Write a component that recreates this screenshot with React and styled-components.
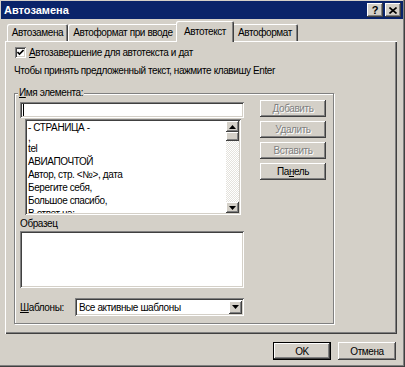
import styled, { createGlobalStyle } from 'styled-components';

const GlobalStyle = createGlobalStyle`
    html, body {
        margin: 0;
        padding: 0;
        background: #d4d0c8;
    }
    body {
        font-family: "Liberation Sans", Arial, sans-serif;
        font-size: 10px;
        letter-spacing: -0.4px;
        color: #000;
    }
    * {
        box-sizing: border-box;
    }
`;

const raised = `
    box-shadow: inset -1px -1px 0 #404040, inset 1px 1px 0 #fff,
        inset -2px -2px 0 #808080, inset 2px 2px 0 #d4d0c8;
`;

const sunken = `
    box-shadow: inset 1px 1px 0 #808080, inset -1px -1px 0 #fff,
        inset 2px 2px 0 #404040, inset -2px -2px 0 #d4d0c8;
`;

const Window = styled.div`
    width: 405px;
    height: 367px;
    padding: 1px 2px 0 1px;
    background: #d4d0c8;
    box-shadow: inset -1px -1px 0 #404040, inset -2px -2px 0 #808080;
`;

const TitleBar = styled.div`
    display: flex;
    align-items: center;
    justify-content: space-between;
    height: 18px;
    padding: 0 2px 0 3px;
    background: #0a246a;
`;

const Title = styled.span`
    color: #fff;
    font-weight: 700;
    font-size: 11px;
    letter-spacing: 0;
`;

const CaptionButtons = styled.div`
    display: flex;
    gap: 2px;
`;

const CaptionButton = styled.div`
    width: 16px;
    height: 14px;
    display: flex;
    align-items: center;
    justify-content: center;
    background: #d4d0c8;
    font-weight: 700;
    font-size: 11px;
    letter-spacing: 0;
    ${raised}
`;

const Content = styled.div`
    padding: 0 0 0 4px;
`;

const TabStrip = styled.div`
    display: flex;
    align-items: flex-end;
    height: 20px;
    margin-top: 2px;
    padding-left: 2px;
`;

const Tab = styled.div`
    position: relative;
    width: ${(p) => p.$w}px;
    height: ${(p) => (p.$active ? 21 : 17)}px;
    margin: ${(p) => (p.$active ? '0 -2px -1px' : '0')};
    padding-top: ${(p) => (p.$active ? 5 : 3)}px;
    text-align: center;
    white-space: nowrap;
    background: #d4d0c8;
    border-radius: 2px 2px 0 0;
    z-index: ${(p) => (p.$active ? 2 : 1)};
    box-shadow: inset 1px 1px 0 #fff, inset -1px 0 0 #404040,
        inset -2px 0 0 #808080;
`;

const Page = styled.div`
    position: relative;
    width: 392px;
    height: 293px;
    padding: 6px 0 0 9px;
    box-shadow: inset 1px 1px 0 #fff, inset -1px -1px 0 #404040,
        inset -2px -2px 0 #808080;
`;

const CheckRow = styled.label`
    display: flex;
    align-items: center;
    gap: 3px;
    height: 11px;
    margin-left: 1px;
`;

const CheckBox = styled.span`
    width: 11px;
    height: 11px;
    display: flex;
    align-items: center;
    justify-content: center;
    background: #fff;
    ${sunken}
`;

const Hint = styled.div`
    margin-top: 7px;
    line-height: 12px;
`;

const GroupBox = styled.fieldset`
    width: 320px;
    height: 237px;
    margin: 10px 0 0 0;
    padding: 3px 0 0 5px;
    border: 1px solid #808080;
    box-shadow: 1px 1px 0 #fff, inset 1px 1px 0 #fff;
`;

const Legend = styled.legend`
    padding: 0 1px;
    margin-left: -2px;
    line-height: 12px;
    background: #d4d0c8;
`;

const GroupInner = styled.div`
    display: flex;
    gap: 16px;
`;

const LeftColumn = styled.div`
    width: 224px;
    display: flex;
    flex-direction: column;
`;

const TextField = styled.div`
    height: 16px;
    padding: 2px 3px;
    background: #fff;
    ${sunken}
`;

const Caret = styled.span`
    display: block;
    width: 1px;
    height: 12px;
    background: #000;
`;

const ListBox = styled.div`
    display: flex;
    width: 216px;
    height: 96px;
    margin: 1px 0 0 5px;
    padding: 2px;
    background: #fff;
    ${sunken}
`;

const ListItems = styled.div`
    flex: 1;
    overflow: hidden;
`;

const ListItem = styled.div`
    height: ${(p) => p.$h || 13}px;
    line-height: ${(p) => p.$h || 13}px;
    padding-left: 1px;
    white-space: nowrap;
`;

const ScrollBar = styled.div`
    width: 13px;
    display: flex;
    flex-direction: column;
    background: repeating-conic-gradient(#fff 0 25%, #e4e2dc 0 50%) 0 0 / 2px 2px;
`;

const ArrowButton = styled.div`
    width: 13px;
    height: ${(p) => p.$h || 13}px;
    display: flex;
    align-items: center;
    justify-content: center;
    flex-shrink: 0;
    background: #d4d0c8;
    ${raised}
`;

const Track = styled.div`
    flex: 1;
`;

const FieldLabel = styled.div`
    margin-top: 2px;
    line-height: 13px;
`;

const Preview = styled.div`
    height: 57px;
    margin-top: 1px;
    background: #fff;
    ${sunken}
`;

const TemplateRow = styled.div`
    display: flex;
    align-items: center;
    margin-top: 10px;
`;

const TemplateLabel = styled.span`
    width: 55px;
`;

const Combo = styled.div`
    display: flex;
    align-items: center;
    width: 169px;
    height: 18px;
    padding: 2px 2px 2px 4px;
    background: #fff;
    ${sunken}
`;

const ComboText = styled.span`
    flex: 1;
    white-space: nowrap;
`;

const ButtonColumn = styled.div`
    display: flex;
    flex-direction: column;
    gap: 4px;
    margin-top: -2px;
`;

const Button = styled.div`
    width: ${(p) => p.$w || 66}px;
    height: ${(p) => p.$h || 17}px;
    display: flex;
    align-items: center;
    justify-content: center;
    background: #d4d0c8;
    color: ${(p) => (p.$disabled ? '#808080' : '#000')};
    text-shadow: ${(p) => (p.$disabled ? '1px 1px 0 #fff' : 'none')};
    ${raised}
    ${(p) =>
        p.$default &&
        `box-shadow: inset 0 0 0 1px #000, inset -2px -2px 0 #404040, inset 2px 2px 0 #fff,
        inset -3px -3px 0 #808080;`}
`;

const Footer = styled.div`
    display: flex;
    justify-content: flex-end;
    gap: 7px;
    width: 392px;
    margin-top: 8px;
    padding-right: 1px;
`;

const ArrowUp = () => (
    <svg width="7" height="4" viewBox="0 0 7 4">
        <polygon points="3.5,0 7,4 0,4" fill="#000" />
    </svg>
);

const ArrowDown = () => (
    <svg width="7" height="4" viewBox="0 0 7 4">
        <polygon points="0,0 7,0 3.5,4" fill="#000" />
    </svg>
);

const App = () => {
    const tabs = [
        { label: 'Автозамена', w: 61 },
        { label: 'Автоформат при вводе', w: 110 },
        { label: 'Автотекст', w: 58, active: true },
        { label: 'Автоформат', w: 66 },
    ];

    const entries = [
        { text: '- СТРАНИЦА -' },
        { text: ',', h: 8 },
        { text: 'tel' },
        { text: 'АВИАПОЧТОЙ' },
        { text: 'Автор, стр. <№>, дата' },
        { text: 'Берегите себя,' },
        { text: 'Большое спасибо,' },
        { text: 'В ответ на:' },
    ];

    const actions = [
        { label: 'Добавить', disabled: true },
        { label: 'Удалить', disabled: true },
        { label: 'Вставить', disabled: true },
        {
            label: (
                <>
                    Па<u>н</u>ель
                </>
            ),
        },
    ];

    return (
        <>
            <GlobalStyle />
            <Window>
                <TitleBar>
                    <Title>Автозамена</Title>
                    <CaptionButtons>
                        <CaptionButton>?</CaptionButton>
                        <CaptionButton>
                            <svg width="8" height="7" viewBox="0 0 8 7">
                                <path
                                    d="M0.5 0.5 L7.5 6.5 M7.5 0.5 L0.5 6.5"
                                    stroke="#000"
                                    strokeWidth="1.6"
                                />
                            </svg>
                        </CaptionButton>
                    </CaptionButtons>
                </TitleBar>
                <Content>
                    <TabStrip>
                        {tabs.map((tab) => (
                            <Tab key={tab.label} $w={tab.w} $active={tab.active}>
                                {tab.label}
                            </Tab>
                        ))}
                    </TabStrip>
                    <Page>
                        <CheckRow>
                            <CheckBox>
                                <svg width="7" height="7" viewBox="0 0 7 7">
                                    <path
                                        d="M0.5 3 L2.5 5 L6.5 1"
                                        stroke="#000"
                                        strokeWidth="1.6"
                                        fill="none"
                                    />
                                </svg>
                            </CheckBox>
                            <span>
                                <u>А</u>втозавершение для автотекста и дат
                            </span>
                        </CheckRow>
                        <Hint>Чтобы принять предложенный текст, нажмите клавишу Enter</Hint>
                        <GroupBox>
                            <Legend>
                                <u>И</u>мя элемента:
                            </Legend>
                            <GroupInner>
                                <LeftColumn>
                                    <TextField>
                                        <Caret />
                                    </TextField>
                                    <ListBox>
                                        <ListItems>
                                            {entries.map((entry) => (
                                                <ListItem key={entry.text} $h={entry.h}>
                                                    {entry.text}
                                                </ListItem>
                                            ))}
                                        </ListItems>
                                        <ScrollBar>
                                            <ArrowButton $h={11}>
                                                <ArrowUp />
                                            </ArrowButton>
                                            <ArrowButton $h={9} />
                                            <Track />
                                            <ArrowButton $h={11}>
                                                <ArrowDown />
                                            </ArrowButton>
                                        </ScrollBar>
                                    </ListBox>
                                    <FieldLabel>Образец</FieldLabel>
                                    <Preview />
                                    <TemplateRow>
                                        <TemplateLabel>
                                            <u>Ш</u>аблоны:
                                        </TemplateLabel>
                                        <Combo>
                                            <ComboText>Все активные шаблоны</ComboText>
                                            <ArrowButton $h={13}>
                                                <ArrowDown />
                                            </ArrowButton>
                                        </Combo>
                                    </TemplateRow>
                                </LeftColumn>
                                <ButtonColumn>
                                    {actions.map((action, i) => (
                                        <Button key={i} $disabled={action.disabled}>
                                            {action.label}
                                        </Button>
                                    ))}
                                </ButtonColumn>
                            </GroupInner>
                        </GroupBox>
                    </Page>
                    <Footer>
                        <Button $w={58} $h={18} $default>
                            OK
                        </Button>
                        <Button $w={58} $h={18}>
                            Отмена
                        </Button>
                    </Footer>
                </Content>
            </Window>
        </>
    );
};

export default App;
